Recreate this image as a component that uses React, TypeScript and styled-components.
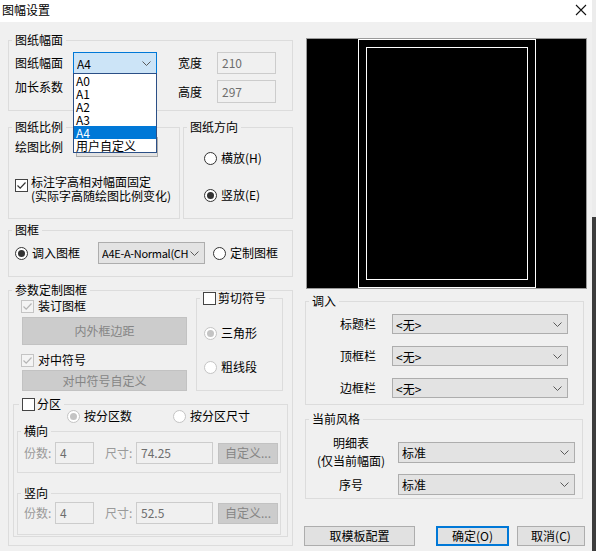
import React from "react";
import styled, { createGlobalStyle } from "styled-components";

const GlobalStyle = createGlobalStyle`
  html, body { margin: 0; padding: 0; }
  body {
    font-family: "Noto Sans CJK SC", "Noto Sans", sans-serif;
    font-size: 12px;
    line-height: 14px;
    color: #000;
    background: #f0f0f0;
  }
  * { box-sizing: border-box; }
`;

const sizes = ["A0", "A1", "A2", "A3", "A4", "用户自定义"];

const Chevron = () => (
  <svg width="9" height="5" viewBox="0 0 9 5">
    <polyline points="0.5,0.5 4.5,4.5 8.5,0.5" fill="none" stroke="#5a5a5a" strokeWidth="1" />
  </svg>
);

const CloseIcon = () => (
  <svg width="12" height="12" viewBox="0 0 12 12">
    <path d="M1 1 L11 11 M11 1 L1 11" stroke="#111" strokeWidth="1.1" />
  </svg>
);

const CheckMark = ({ color }: { color: string }) => (
  <svg width="11" height="11" viewBox="0 0 11 11">
    <polyline points="1.5,5.5 4.2,8.2 9.5,2.5" fill="none" stroke={color} strokeWidth="1.2" />
  </svg>
);

const Radio = ({ on, off }: { on?: boolean; off?: boolean }) => (
  <RadioRing $off={off}>{on && <RadioDot $off={off} />}</RadioRing>
);

const Check = ({ on, off }: { on?: boolean; off?: boolean }) => (
  <CheckBox $off={off}>{on && <CheckMark color={off ? "#b5b5b5" : "#333"} />}</CheckBox>
);

const Combo = ({
  w,
  h,
  focus,
  narrow,
  children,
}: {
  w: number;
  h: number;
  focus?: boolean;
  narrow?: boolean;
  children?: React.ReactNode;
}) => (
  <ComboBox $w={w} $h={h} $focus={focus}>
    <ComboText $narrow={narrow}>{children}</ComboText>
    <Chevron />
  </ComboBox>
);

const DivisionRow = ({ count, size }: { count: string; size: string }) => (
  <FieldRow>
    <Label $muted $w={31}>份数:</Label>
    <TextBox $w={39} $h={22}>{count}</TextBox>
    <Label $muted $w={31} $ml={11}>尺寸:</Label>
    <TextBox $w={77} $h={22}>{size}</TextBox>
    <FlatButton $w={60} $h={21} $ml={5}>自定义...</FlatButton>
  </FieldRow>
);

export default function App() {
  return (
    <>
      <GlobalStyle />
      <Screen>
        <Dialog>
          <TitleBar>
            <span>图幅设置</span>
            <CloseIcon />
          </TitleBar>
          <Body>
            <LeftColumn>
              <Group $h={78}>
                <Legend>图纸幅面</Legend>
                <SizeGrid>
                  <Label>图纸幅面</Label>
                  <ComboAnchor>
                    <Combo w={84} h={22} focus>A4</Combo>
                    <DropList>
                      {sizes.map((s) => (
                        <DropItem key={s} $active={s === "A4"}>
                          {s}
                        </DropItem>
                      ))}
                    </DropList>
                  </ComboAnchor>
                  <Label $indent={21}>宽度</Label>
                  <TextBox $w={59} $h={22}>210</TextBox>
                  <Label $top>加长系数</Label>
                  <span />
                  <Label $indent={21}>高度</Label>
                  <TextBox $w={59} $h={23}>297</TextBox>
                </SizeGrid>
              </Group>

              <Pair>
                <Group $w={172} $h={99}>
                  <Legend>图纸比例</Legend>
                  <ScaleRow>
                    <Label $w={61}>绘图比例</Label>
                    <Combo w={82} h={20} />
                  </ScaleRow>
                  <NoteRow>
                    <Check on />
                    <NoteText>
                      标注字高相对幅面固定
                      <br />
                      (实际字高随绘图比例变化)
                    </NoteText>
                  </NoteRow>
                </Group>
                <Group $w={110} $h={99}>
                  <Legend>图纸方向</Legend>
                  <RadioStack $pt={17} $pl={14} $gap={23}>
                    <Option>
                      <Radio />
                      横放(H)
                    </Option>
                    <Option>
                      <Radio on />
                      竖放(E)
                    </Option>
                  </RadioStack>
                </Group>
              </Pair>

              <Group $h={54} $mt={4}>
                <Legend>图框</Legend>
                <FrameRow>
                  <Option>
                    <Radio on />
                    调入图框
                  </Option>
                  <ComboSlot $ml={18}>
                    <Combo w={107} h={22} narrow>
                      A4E-A-Normal(CH
                    </Combo>
                  </ComboSlot>
                  <Option $ml={8}>
                    <Radio />
                    定制图框
                  </Option>
                </FrameRow>
              </Group>

              <Group $h={263} $mt={6}>
                <Legend>参数定制图框</Legend>
                <TopPart>
                  <LeftStack>
                    <Option $mt={2}>
                      <Check on off />
                      装订图框
                    </Option>
                    <FlatButton $w={165} $h={28} $ml={1} $mt={4}>
                      内外框边距
                    </FlatButton>
                    <Option $mt={8}>
                      <Check on off />
                      对中符号
                    </Option>
                    <FlatButton $w={165} $h={21} $ml={1} $mt={3}>
                      对中符号自定义
                    </FlatButton>
                  </LeftStack>
                  <Group $w={87} $h={100} $mt={-6} $ml={9}>
                    <Legend>
                      <LegendInner>
                        <Check />
                        剪切符号
                      </LegendInner>
                    </Legend>
                    <RadioStack $pt={21} $pl={1} $gap={20}>
                      <Option>
                        <Radio on off />
                        三角形
                      </Option>
                      <Option>
                        <Radio off />
                        粗线段
                      </Option>
                    </RadioStack>
                  </Group>
                </TopPart>

                <Group $w={275} $h={140} $mt={6} $ml={-2} $px={8}>
                  <Legend>
                    <LegendInner>
                      <Check />
                      分区
                    </LegendInner>
                  </Legend>
                  <ModeRow>
                    <Option>
                      <Radio on off />
                      按分区数
                    </Option>
                    <Option $ml={41}>
                      <Radio off />
                      按分区尺寸
                    </Option>
                  </ModeRow>
                  <Group $w={264} $h={49} $mt={1} $ml={-5}>
                    <Legend>横向</Legend>
                    <RowPad $pt={4}>
                      <DivisionRow count="4" size="74.25" />
                    </RowPad>
                  </Group>
                  <Group $w={264} $h={49} $mt={13} $ml={-5}>
                    <Legend>竖向</Legend>
                    <RowPad $pt={2}>
                      <DivisionRow count="4" size="52.5" />
                    </RowPad>
                  </Group>
                </Group>
              </Group>
            </LeftColumn>

            <RightColumn>
              <Preview>
                <svg width="279" height="249" viewBox="0 0 279 249">
                  <rect x="0" y="0" width="279" height="249" fill="#000" />
                  <rect x="51.5" y="0.5" width="177" height="248" fill="none" stroke="#fff" />
                  <rect x="59.5" y="8.5" width="161" height="232" fill="none" stroke="#fff" />
                </svg>
              </Preview>

              <Group $w={279} $h={111} $mt={5} $ml={1}>
                <Legend>调入</Legend>
                <LoadGrid>
                  <Label $right>标题栏</Label>
                  <Combo w={176} h={20}>&lt;无&gt;</Combo>
                  <Label $right>顶框栏</Label>
                  <Combo w={176} h={20}>&lt;无&gt;</Combo>
                  <Label $right>边框栏</Label>
                  <Combo w={176} h={20}>&lt;无&gt;</Combo>
                </LoadGrid>
              </Group>

              <Group $w={278} $h={87} $mt={7} $ml={1}>
                <Legend>当前风格</Legend>
                <StyleGrid>
                  <StyleLabel>
                    明细表
                    <br />
                    (仅当前幅面)
                  </StyleLabel>
                  <Combo w={177} h={21}>标准</Combo>
                  <StyleLabel>序号</StyleLabel>
                  <Combo w={177} h={21}>标准</Combo>
                </StyleGrid>
              </Group>

              <ButtonRow>
                <PushButton $w={111}>取模板配置</PushButton>
                <PushButton $w={73} $ml={21} $primary>
                  确定(O)
                </PushButton>
                <PushButton $w={68} $ml={8}>
                  取消(C)
                </PushButton>
              </ButtonRow>
            </RightColumn>
          </Body>
        </Dialog>
        <EdgeStrip />
      </Screen>
    </>
  );
}

const Screen = styled.div`
  display: flex;
  width: 596px;
  height: 551px;
  overflow: hidden;
`;

const Dialog = styled.div`
  width: 592px;
  height: 551px;
  background: #f0f0f0;
  display: flex;
  flex-direction: column;
`;

const EdgeStrip = styled.div`
  width: 4px;
  height: 551px;
  background: linear-gradient(#ececec 0 217px, #3d3d3d 217px);
`;

const TitleBar = styled.div`
  height: 22px;
  background: #fff;
  display: flex;
  align-items: center;
  justify-content: space-between;
  padding: 0 5px 2px 2px;
  flex-shrink: 0;
`;

const Body = styled.div`
  display: flex;
  padding: 11px 0 0 8px;
  gap: 11px;
`;

const LeftColumn = styled.div`
  width: 285px;
  display: flex;
  flex-direction: column;
`;

const RightColumn = styled.div`
  width: 284px;
  display: flex;
  flex-direction: column;
`;

const Group = styled.fieldset<{
  $w?: number;
  $h: number;
  $px?: number;
  $mt?: number;
  $ml?: number;
}>`
  margin: ${(p) => p.$mt ?? 0}px 0 0 ${(p) => p.$ml ?? 0}px;
  padding: 0 ${(p) => p.$px ?? 6}px;
  border: 1px solid #dcdcdc;
  min-width: 0;
  width: ${(p) => (p.$w ? `${p.$w}px` : "auto")};
  height: ${(p) => p.$h}px;
  flex-shrink: 0;
`;

const Legend = styled.legend`
  padding: 0 3px;
  margin-left: -3px;
  line-height: 14px;
  height: 14px;
`;

const LegendInner = styled.span`
  display: flex;
  align-items: center;
  gap: 2px;
`;

const Label = styled.span<{
  $indent?: number;
  $top?: boolean;
  $w?: number;
  $ml?: number;
  $muted?: boolean;
  $right?: boolean;
}>`
  padding-left: ${(p) => p.$indent ?? 0}px;
  align-self: ${(p) => (p.$top ? "start" : "center")};
  width: ${(p) => (p.$w ? `${p.$w}px` : "auto")};
  margin-left: ${(p) => p.$ml ?? 0}px;
  color: ${(p) => (p.$muted ? "#9a9a9a" : "#000")};
  text-align: ${(p) => (p.$right ? "right" : "left")};
  white-space: nowrap;
  flex-shrink: 0;
`;

const SizeGrid = styled.div`
  display: grid;
  grid-template-columns: 58px 84px 60px 59px;
  grid-template-rows: 22px 23px;
  row-gap: 6px;
  align-items: center;
  padding-top: 5px;
`;

const ComboAnchor = styled.div`
  position: relative;
  height: 22px;
`;

const ComboSlot = styled.div<{ $ml?: number }>`
  margin-left: ${(p) => p.$ml ?? 0}px;
`;

const ComboBox = styled.div<{ $w: number; $h: number; $focus?: boolean }>`
  width: ${(p) => p.$w}px;
  height: ${(p) => p.$h}px;
  border: 1px solid ${(p) => (p.$focus ? "#0078d7" : "#adadad")};
  background: ${(p) => (p.$focus ? "#cce4f7" : "#e3e3e3")};
  display: flex;
  align-items: center;
  justify-content: space-between;
  padding: 0 5px 0 3px;
  flex-shrink: 0;
`;

const ComboText = styled.span<{ $narrow?: boolean }>`
  white-space: nowrap;
  overflow: hidden;
  flex: 1;
  line-height: 17px;
  font-size: ${(p) => (p.$narrow ? "11px" : "12px")};
  letter-spacing: ${(p) => (p.$narrow ? "-0.3px" : "normal")};
`;

const DropList = styled.div`
  position: absolute;
  top: 21px;
  left: 0;
  width: 84px;
  border: 1px solid #2b4f86;
  background: #fff;
  z-index: 3;
`;

const DropItem = styled.div<{ $active?: boolean }>`
  height: 13px;
  line-height: 13px;
  padding-left: 2px;
  background: ${(p) => (p.$active ? "#0078d7" : "#fff")};
  color: ${(p) => (p.$active ? "#fff" : "#000")};
`;

const TextBox = styled.div<{ $w: number; $h: number }>`
  width: ${(p) => p.$w}px;
  height: ${(p) => p.$h}px;
  border: 1px solid #cccccc;
  background: #f0f0f0;
  color: #6d6d6d;
  padding-left: 4px;
  line-height: ${(p) => p.$h - 2}px;
  flex-shrink: 0;
`;

const Pair = styled.div`
  display: flex;
  gap: 3px;
  margin-top: 9px;
`;

const ScaleRow = styled.div`
  display: flex;
  align-items: center;
  padding-top: 3px;
`;

const NoteRow = styled.div`
  display: flex;
  align-items: flex-start;
  gap: 3px;
  margin-top: 18px;
  & > span:first-child {
    margin-top: 4px;
  }
`;

const NoteText = styled.div`
  line-height: 14px;
  white-space: nowrap;
`;

const RadioStack = styled.div<{ $pt: number; $pl: number; $gap: number }>`
  display: flex;
  flex-direction: column;
  gap: ${(p) => p.$gap}px;
  padding: ${(p) => p.$pt}px 0 0 ${(p) => p.$pl}px;
`;

const Option = styled.div<{ $ml?: number; $mt?: number }>`
  display: flex;
  align-items: center;
  gap: 4px;
  height: 14px;
  white-space: nowrap;
  margin: ${(p) => p.$mt ?? 0}px 0 0 ${(p) => p.$ml ?? 0}px;
`;

const RadioRing = styled.span<{ $off?: boolean }>`
  width: 13px;
  height: 13px;
  border-radius: 50%;
  border: 1px solid ${(p) => (p.$off ? "#c4c4c4" : "#333")};
  background: #fff;
  display: inline-flex;
  align-items: center;
  justify-content: center;
  flex-shrink: 0;
`;

const RadioDot = styled.span<{ $off?: boolean }>`
  width: 7px;
  height: 7px;
  border-radius: 50%;
  background: ${(p) => (p.$off ? "#c4c4c4" : "#333")};
`;

const CheckBox = styled.span<{ $off?: boolean }>`
  width: 13px;
  height: 13px;
  border: 1px solid ${(p) => (p.$off ? "#c4c4c4" : "#444")};
  background: ${(p) => (p.$off ? "#f4f4f4" : "#fff")};
  display: inline-flex;
  align-items: center;
  justify-content: center;
  flex-shrink: 0;
`;

const FrameRow = styled.div`
  display: flex;
  align-items: center;
  height: 22px;
  margin-top: 5px;
`;

const TopPart = styled.div`
  display: flex;
  align-items: flex-start;
`;

const LeftStack = styled.div`
  width: 166px;
  margin-left: 6px;
  display: flex;
  flex-direction: column;
`;

const FlatButton = styled.div<{ $w: number; $h: number; $ml?: number; $mt?: number }>`
  width: ${(p) => p.$w}px;
  height: ${(p) => p.$h}px;
  margin: ${(p) => p.$mt ?? 0}px 0 0 ${(p) => p.$ml ?? 0}px;
  background: #cccccc;
  border: 1px solid #c2c2c2;
  color: #858585;
  display: flex;
  align-items: center;
  justify-content: center;
  white-space: nowrap;
  flex-shrink: 0;
`;

const ModeRow = styled.div`
  display: flex;
  margin: -2px 0 0 45px;
`;

const RowPad = styled.div<{ $pt: number }>`
  padding-top: ${(p) => p.$pt}px;
`;

const FieldRow = styled.div`
  display: flex;
  align-items: center;
`;

const Preview = styled.div`
  width: 281px;
  height: 251px;
  margin: 5px 0 0 2px;
  border: 1px solid #9a9a9a;
  background: #000;
  line-height: 0;
`;

const LoadGrid = styled.div`
  display: grid;
  grid-template-columns: 64px 176px;
  column-gap: 16px;
  row-gap: 12px;
  align-items: center;
  padding-top: 6px;
`;

const StyleGrid = styled.div`
  display: grid;
  grid-template-columns: 78px 177px;
  grid-template-rows: 36px 21px;
  column-gap: 8px;
  row-gap: 4px;
  align-items: center;
  padding-top: 8px;
`;

const StyleLabel = styled.div`
  text-align: center;
  line-height: 18px;
  white-space: nowrap;
`;

const ButtonRow = styled.div`
  display: flex;
  margin-top: 27px;
`;

const PushButton = styled.div<{ $w: number; $ml?: number; $primary?: boolean }>`
  width: ${(p) => p.$w}px;
  height: 20px;
  margin-left: ${(p) => p.$ml ?? 0}px;
  background: #e1e1e1;
  border: ${(p) => (p.$primary ? "2px solid #0078d7" : "1px solid #adadad")};
  display: flex;
  align-items: center;
  justify-content: center;
  white-space: nowrap;
`;
